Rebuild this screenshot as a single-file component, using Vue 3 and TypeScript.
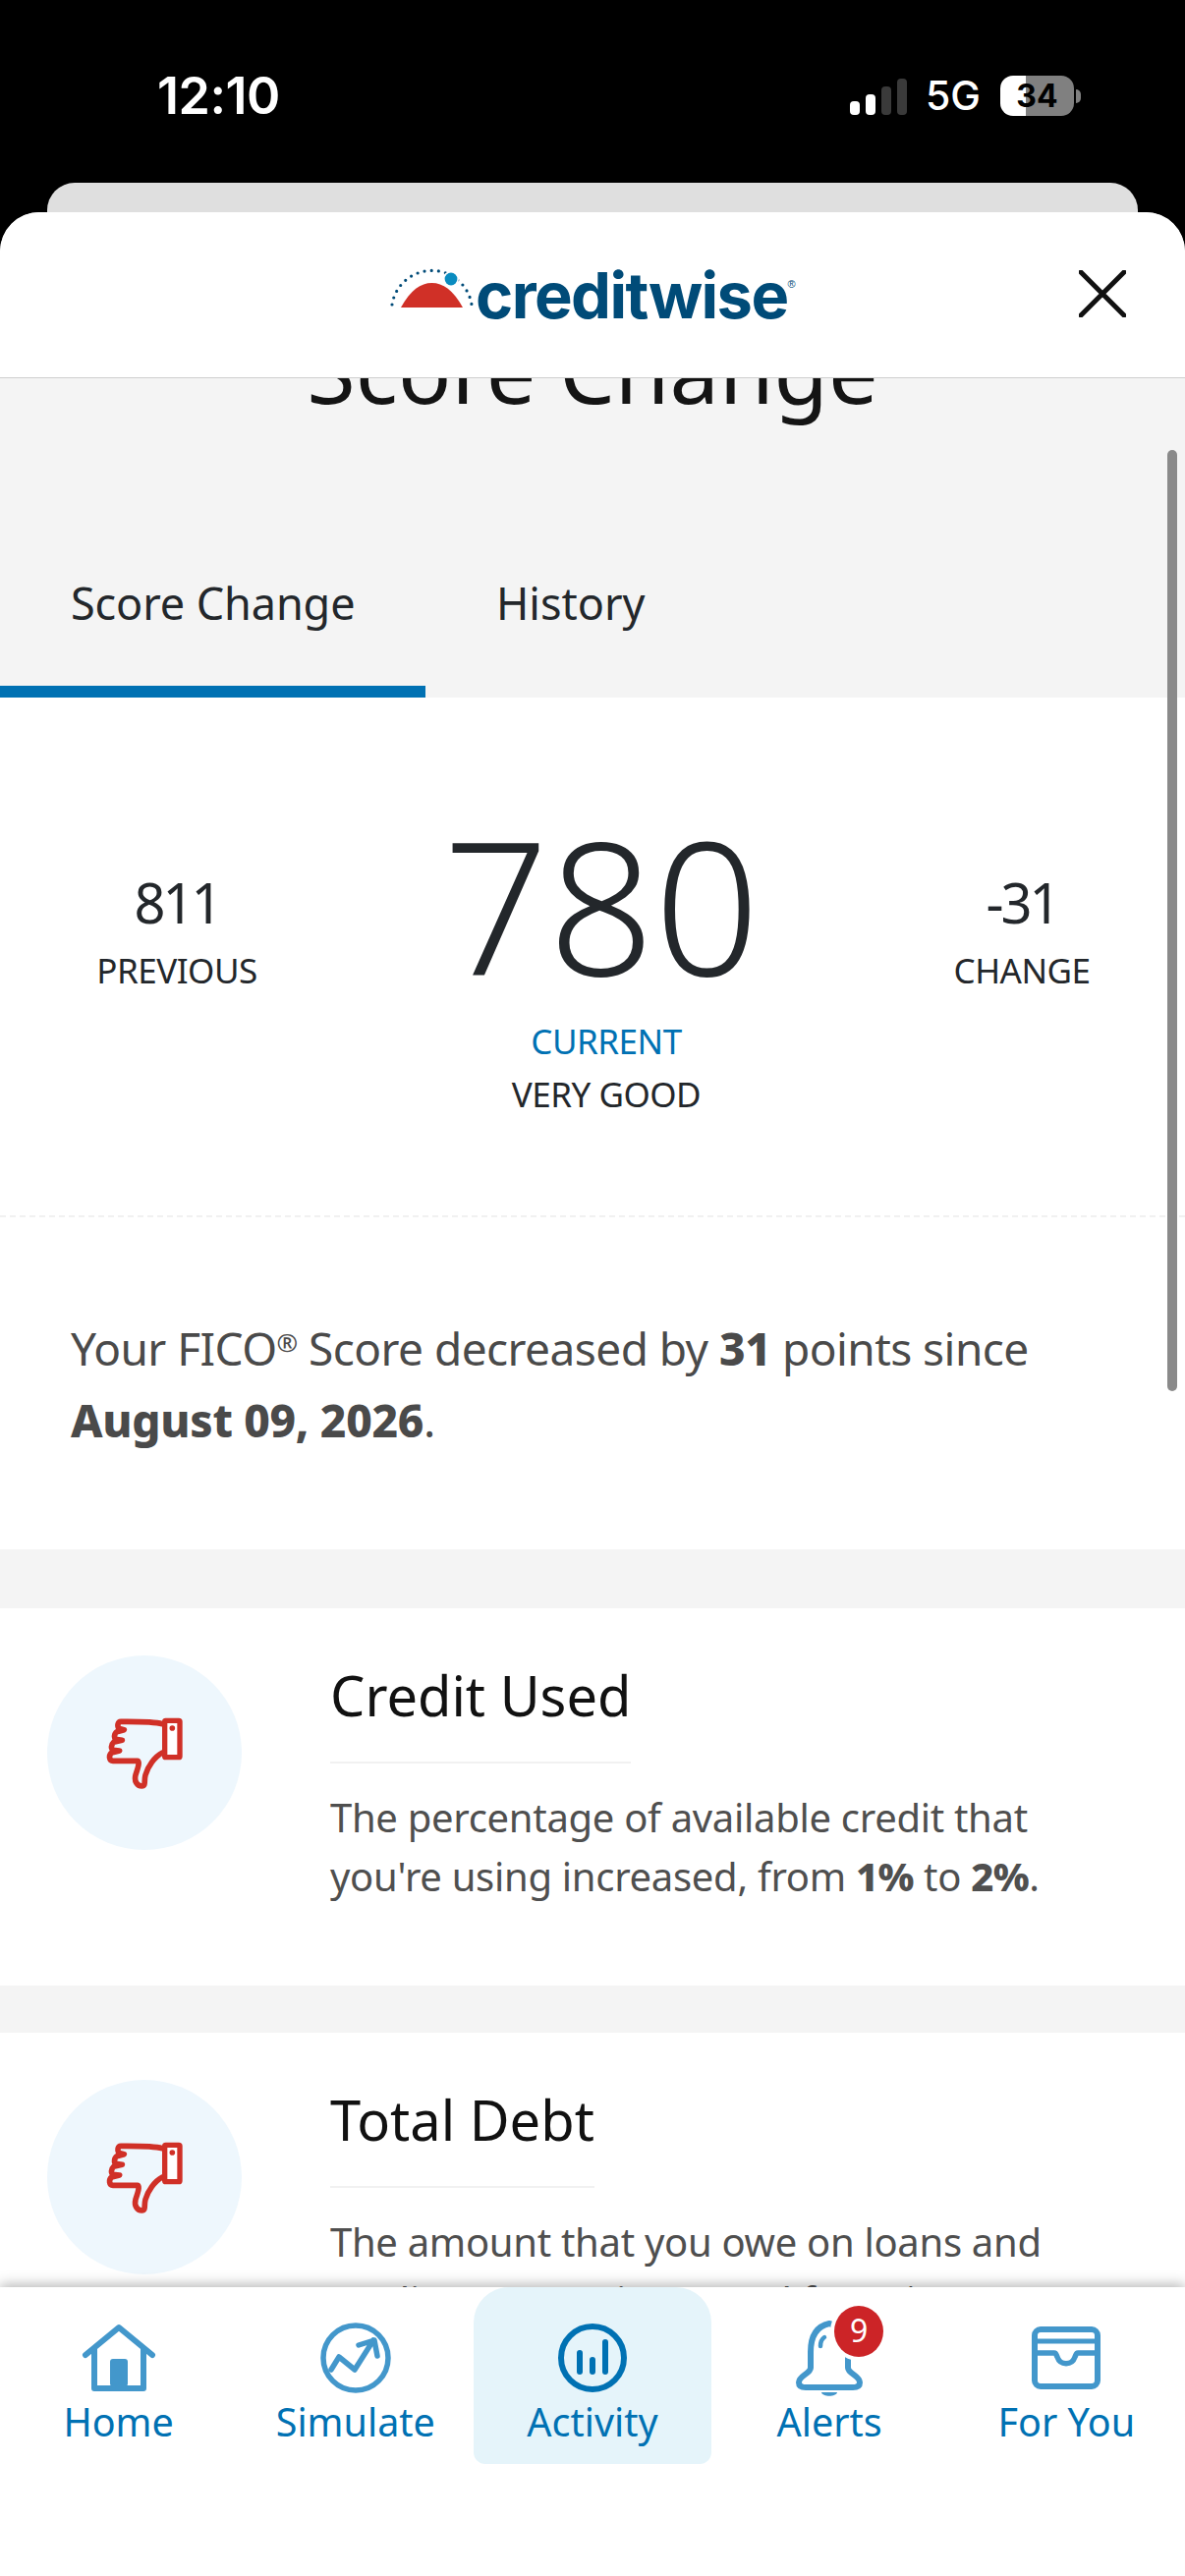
<script setup lang="ts">
const tabs = ['Home', 'Simulate', 'Activity', 'Alerts', 'For You']
</script>

<template>
  <div class="screen">
    <div class="status">
      <span class="time">12:10</span>
      <div class="status-right">
        <div class="signal">
          <i class="b1"></i><i class="b2"></i><i class="b3"></i><i class="b4"></i>
        </div>
        <span class="net">5G</span>
        <div class="battery"><span>34</span></div>
        <i class="nub"></i>
      </div>
    </div>
    <div class="back-sheet"></div>

    <div class="sheet">
      <header class="head">
        <div class="logo">
          <svg class="logo-mark" viewBox="395 285 95 45" width="95" height="45">
            <path d="M399 323 A41 41 0 0 1 480 323" fill="none" stroke="#004b78" stroke-width="3.2" stroke-linecap="round" stroke-dasharray="0 7.2" />
            <path d="M408 326 C418 308 428 301 439.5 301 C451 301 461 308 471 326 Z" fill="#d03027" />
            <circle cx="459" cy="297" r="8" fill="#fff" />
            <circle cx="459" cy="297" r="6.4" fill="#0a8cc0" />
          </svg>
          <span class="logo-text">creditwise</span><span class="logo-r">®</span>
        </div>
        <svg class="close" viewBox="0 0 48 48" width="48" height="48">
          <path d="M2 2 L46 46 M46 2 L2 46" stroke="#111" stroke-width="5" stroke-linecap="round" fill="none" />
        </svg>
      </header>

      <main class="content">
        <section class="hero">
          <h1 class="title">Score Change</h1>
          <div class="tabs">
            <div class="tab active">Score Change</div>
            <div class="tab">History</div>
          </div>
        </section>

        <section class="scores">
          <div class="side">
            <div class="side-num">811</div>
            <div class="side-label">PREVIOUS</div>
          </div>
          <div class="mid">
            <div class="big">780</div>
            <div class="current">CURRENT</div>
            <div class="rating">VERY GOOD</div>
          </div>
          <div class="side">
            <div class="side-num">-31</div>
            <div class="side-label">CHANGE</div>
          </div>
        </section>

        <section class="summary">
          <p>Your FICO<sup>®</sup> Score decreased by <b>31</b> points since <b>August 09, 2026</b>.</p>
        </section>

        <section class="card first">
          <div class="badge-circle">
            <svg viewBox="320 258 240 228" width="80" height="76">
              <path d="M495 284 C465 276 420 277 368 277 C358 277 357 290 361 298 L378 302 L356 308 C347 314 347 328 352 331 L372 334 L346 340 C337 348 338 360 344 364 L364 366 L340 372 C330 380 332 397 344 397 L418 397 C428 398 418 425 413 440 C408 460 418 474 432 474 C445 474 438 460 443 440 C450 415 470 385 495 372" fill="none" stroke="#d03027" stroke-width="17" stroke-linecap="round" stroke-linejoin="round" />
              <rect x="502" y="274" width="46" height="112" rx="3" fill="#fff" stroke="#d03027" stroke-width="16" stroke-linejoin="round" />
              <circle cx="525" cy="297" r="8.5" fill="#d03027" />
            </svg>
          </div>
          <div class="body">
            <div class="card-title"><span>Credit Used</span></div>
            <p class="desc">The percentage of available credit that you're using increased, from <b>1%</b> to <b>2%</b>.</p>
          </div>
        </section>

        <section class="card">
          <div class="badge-circle">
            <svg viewBox="320 258 240 228" width="80" height="76">
              <path d="M495 284 C465 276 420 277 368 277 C358 277 357 290 361 298 L378 302 L356 308 C347 314 347 328 352 331 L372 334 L346 340 C337 348 338 360 344 364 L364 366 L340 372 C330 380 332 397 344 397 L418 397 C428 398 418 425 413 440 C408 460 418 474 432 474 C445 474 438 460 443 440 C450 415 470 385 495 372" fill="none" stroke="#d03027" stroke-width="17" stroke-linecap="round" stroke-linejoin="round" />
              <rect x="502" y="274" width="46" height="112" rx="3" fill="#fff" stroke="#d03027" stroke-width="16" stroke-linejoin="round" />
              <circle cx="525" cy="297" r="8.5" fill="#d03027" />
            </svg>
          </div>
          <div class="body">
            <div class="card-title"><span>Total Debt</span></div>
            <p class="desc">The amount that you owe on loans and credit accounts increased from $300</p>
          </div>
        </section>

        <div class="scrollbar"></div>
      </main>

      <nav class="nav">
        <div v-for="(t, i) in tabs" :key="t" class="nav-item" :class="{ on: t === 'Activity' }">
          <div class="nav-icon">
            <svg v-if="i === 0" viewBox="0 0 80 80" width="80" height="80">
              <path d="M6 37 L40 9 L74 37" fill="none" stroke="#4397cb" stroke-width="6" stroke-linecap="round" stroke-linejoin="round" />
              <path d="M15 31 V71 H65 V31" fill="none" stroke="#4397cb" stroke-width="6" stroke-linejoin="round" />
              <rect x="31" y="41" width="18" height="28" rx="3" fill="#4397cb" />
            </svg>
            <svg v-else-if="i === 1" viewBox="0 0 80 80" width="80" height="80">
              <circle cx="40" cy="40" r="33" fill="none" stroke="#4397cb" stroke-width="5.5" />
              <path d="M15 52 L23 39 L39 52 L58 22 M43 27 L59 22 L62 38" fill="none" stroke="#4397cb" stroke-width="5.5" stroke-linecap="round" stroke-linejoin="round" />
            </svg>
            <svg v-else-if="i === 2" viewBox="0 0 80 80" width="80" height="80">
              <circle cx="40" cy="40" r="32" fill="none" stroke="#0071b3" stroke-width="6" />
              <path d="M27 35 V54 M40 42 V54 M53 24 V54" fill="none" stroke="#0071b3" stroke-width="6" stroke-linecap="round" />
            </svg>
            <svg v-else-if="i === 3" viewBox="0 0 80 80" width="80" height="80">
              <path d="M40 5 C26 8 21 20 21 34 V50 C21 56 9 58 9 65 C9 69 12 70 16 70 H64 C68 70 71 69 71 65 C71 58 59 56 59 50 V34 C59 20 54 8 40 5 Z" fill="none" stroke="#4397cb" stroke-width="6" stroke-linejoin="round" />
              <path d="M31 28 C31 24 32 21 35 19" fill="none" stroke="#4397cb" stroke-width="4.5" stroke-linecap="round" />
              <path d="M32 75 H48 C47 80 33 80 32 75 Z" fill="#4397cb" />
            </svg>
            <svg v-else viewBox="0 0 80 80" width="80" height="80">
              <rect x="8" y="11" width="64" height="58" rx="6" fill="none" stroke="#4397cb" stroke-width="6" />
              <path d="M8 23 H72" stroke="#4397cb" stroke-width="5" />
              <path d="M8 35 H28 C30 35 30 37 31 39 C34 48 46 48 49 39 C50 37 50 35 52 35 H72" fill="none" stroke="#4397cb" stroke-width="5.5" />
            </svg>
            <span v-if="t === 'Alerts'" class="count">9</span>
          </div>
          <span class="nav-label">{{ t }}</span>
        </div>
      </nav>
    </div>
  </div>
</template>

<style>
html, body { margin: 0; padding: 0; background: #000; }
</style>

<style scoped>
* { box-sizing: border-box; }
.screen {
  width: 1206px;
  height: 2622px;
  background: #000;
  display: flex;
  flex-direction: column;
  overflow: hidden;
  font-family: "Noto Sans", sans-serif;
}
.status {
  height: 186px;
  flex: none;
  padding: 0 106px 0 160px;
  display: flex;
  justify-content: space-between;
  align-items: flex-start;
  color: #fff;
  font-family: Inter, sans-serif;
}
.time {
  margin-top: 67px;
  font-size: 52px;
  line-height: 62px;
  font-weight: 600;
  letter-spacing: -0.5px;
}
.status-right {
  margin-top: 77px;
  display: flex;
  align-items: center;
  height: 41px;
}
.signal { display: flex; align-items: flex-end; gap: 6px; height: 37px; margin-top: 2px; margin-right: 19px; }
.signal i { display: block; width: 10px; border-radius: 4px; background: #fff; }
.signal .b1 { height: 14px; }
.signal .b2 { height: 21px; }
.signal .b3 { height: 29px; background: #3a3a3a; }
.signal .b4 { height: 37px; background: #3a3a3a; }
.net { font-size: 41px; font-weight: 500; line-height: 41px; margin-right: 20px; }
.battery {
  width: 75px;
  height: 41px;
  border-radius: 13px;
  background: linear-gradient(to right, #fff 0 26px, #808080 26px);
  color: #000;
  display: flex;
  align-items: center;
  justify-content: center;
  font-size: 32px;
  font-weight: 700;
}
.nub { display: block; width: 5px; height: 14px; margin-left: 2px; background: #808080; border-radius: 0 6px 6px 0; }
.back-sheet {
  height: 30px;
  flex: none;
  margin: 0 48px;
  background: #dfdfdf;
  border-radius: 28px 28px 0 0;
}
.sheet {
  flex: 1;
  min-height: 0;
  background: #fff;
  border-radius: 40px 40px 0 0;
  display: flex;
  flex-direction: column;
  overflow: hidden;
}
.head {
  height: 169px;
  flex: none;
  border-bottom: 1px solid #cfcfcf;
  display: flex;
  align-items: center;
  position: relative;
  padding-left: 395px;
  background: #fff;
}
.logo { display: flex; align-items: flex-start; height: 60px; margin-top: 2px; }
.logo-mark { margin-top: 1px; margin-right: -6px; flex: none; }
.logo-text {
  font-family: Inter, sans-serif;
  font-size: 65px;
  line-height: 60px;
  font-weight: 700;
  letter-spacing: -1.6px;
  color: #004b78;
}
.logo-r { font-size: 11px; color: #004b78; margin-top: 12px; line-height: 12px; font-family: "Liberation Sans", sans-serif; }
.close { position: absolute; right: 60px; top: 59px; }
.content {
  flex: 1;
  min-height: 0;
  overflow: hidden;
  position: relative;
  background: #f4f4f4;
}
.hero {
  height: 325px;
  background: #f4f4f4;
  display: flex;
  flex-direction: column;
  justify-content: flex-end;
  overflow: hidden;
}
.title {
  margin: 0 0 auto;
  margin-top: -71px;
  font-size: 90px;
  line-height: 124px;
  font-weight: 400;
  text-align: center;
  color: #141414;
  width: 1206px;
  flex: none;
}
.tabs { display: flex; flex: none; }
.tab {
  height: 115px;
  padding: 0 0 0 72px;
  font-size: 45px;
  line-height: 62px;
  color: #23272b;
  margin-bottom: 12px;
  width: 433px;
}
.tab.active { position: relative; letter-spacing: -0.1px; }
.tab.active::after {
  content: "";
  position: absolute;
  left: 0;
  right: 0;
  bottom: -12px;
  height: 12px;
  background: #0071b3;
}
.scores {
  background: #fff;
  height: 529px;
  display: grid;
  grid-template-columns: 360px 514px 332px;
  border-bottom: 2px dashed #f1f1f1;
  color: #23272b;
  text-align: center;
}
.side { padding-top: 170px; }
.side-num { font-size: 56px; line-height: 76px; letter-spacing: -3px; }
.side-label { font-size: 35px; line-height: 48px; margin-top: 8px; letter-spacing: -0.5px; }
.big {
  font-size: 188px;
  line-height: 220px;
  font-weight: 300;
  margin-top: 100px;
  margin-left: -10px;
}
.current { color: #0071b3; font-size: 35px; line-height: 48px; margin-top: 6px; letter-spacing: -0.5px; }
.rating { font-size: 35px; line-height: 48px; margin-top: 6px; letter-spacing: -0.5px; }
.summary {
  background: #fff;
  height: 338px;
  padding: 97px 72px 0;
}
.summary p {
  margin: 0;
  font-size: 46px;
  line-height: 73px;
  color: #4a4a4a;
  letter-spacing: -0.55px;
}
.summary b { font-weight: 800; letter-spacing: -0.3px; }
.summary sup { font-size: 26px; line-height: 0; vertical-align: 14px; }
.card {
  background: #fff;
  margin-top: 48px;
  padding: 48px 48px 0;
  height: 384px;
  display: flex;
  align-items: flex-start;
}
.card.first { margin-top: 60px; }
.badge-circle {
  width: 198px;
  height: 198px;
  border-radius: 50%;
  background: #eef7fd;
  display: flex;
  align-items: center;
  justify-content: center;
  flex: none;
}
.body { margin-left: 90px; min-width: 0; width: 740px; }
.card-title { line-height: 0; }
.card-title span {
  display: inline-block;
  font-size: 56px;
  line-height: 84px;
  color: #111;
  margin-top: -2px;
  padding-bottom: 26px;
  border-bottom: 2px solid #f1f1f1;
}
.desc {
  margin: 25px 0 0;
  font-size: 40px;
  line-height: 60px;
  color: #4f4f4f;
  letter-spacing: -0.3px;
}
.desc b { font-weight: 800; letter-spacing: -0.5px; }
.scrollbar {
  position: absolute;
  right: 8px;
  top: 73px;
  width: 10px;
  height: 958px;
  border-radius: 5px;
  background: #8a8a8a;
}
.nav {
  height: 294px;
  flex: none;
  background: #fff;
  display: grid;
  grid-template-columns: repeat(5, 241.2px);
  box-shadow: 0 -3px 12px rgba(0, 0, 0, 0.28);
  position: relative;
  align-items: start;
}
.nav-item {
  height: 180px;
  display: flex;
  flex-direction: column;
  align-items: center;
  padding-top: 32px;
  border-radius: 36px 36px 12px 12px;
}
.nav-item.on { background: #e5f4fa; }
.nav-icon { position: relative; width: 80px; height: 80px; }
.nav-icon svg { display: block; }
.count {
  position: absolute;
  left: 45px;
  top: -13px;
  width: 50px;
  height: 52px;
  border-radius: 50%;
  background: #cc2427;
  box-shadow: 0 0 0 4px #fff;
  color: #fff;
  font-size: 32px;
  line-height: 50px;
  text-align: center;
}
.nav-label {
  font-size: 39.5px;
  line-height: 54px;
  color: #0071b3;
  margin-top: -2px;
  white-space: nowrap;
}
</style>
